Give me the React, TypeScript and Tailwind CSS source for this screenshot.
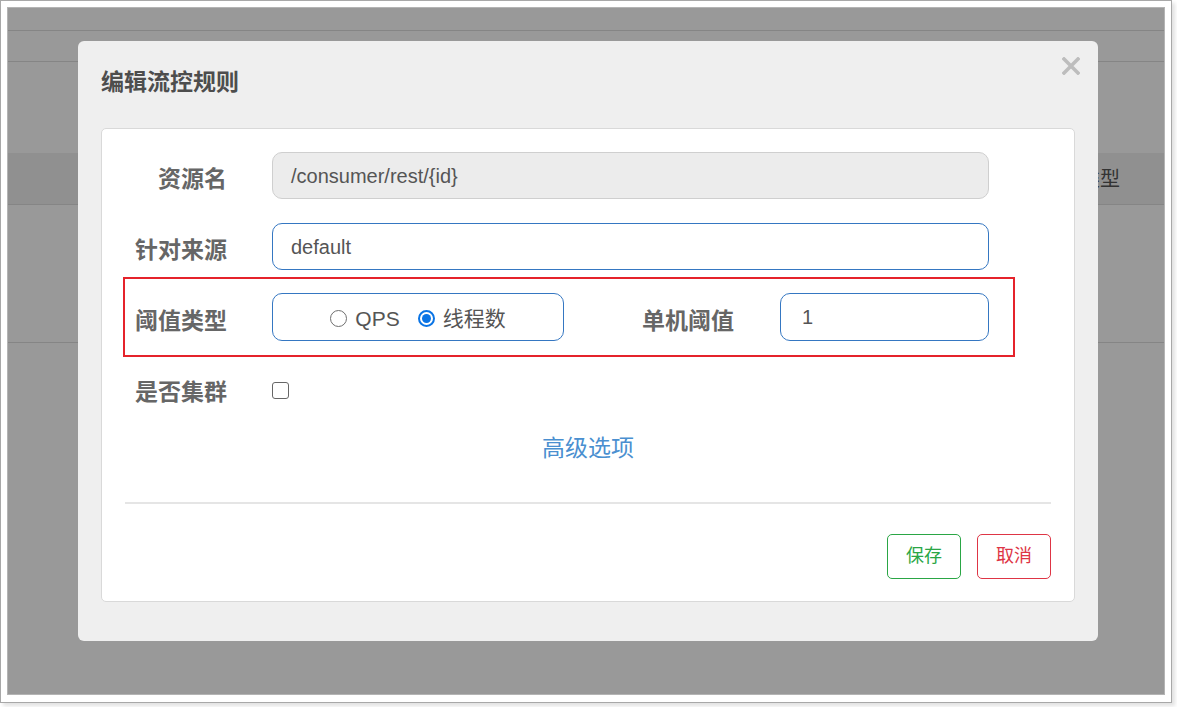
import React from "react";

const FONT = "font-['Liberation_Sans','Noto_Sans_CJK_SC',sans-serif]";

function Label({ children, className = "" }: { children: React.ReactNode; className?: string }) {
  return (
    <div className={`shrink-0 text-right text-[23px] leading-[28px] font-bold text-[#666] pt-[7px] ${className}`}>
      {children}
    </div>
  );
}

function Radio({ checked }: { checked?: boolean }) {
  if (checked) {
    return (
      <span className="w-[17px] h-[17px] rounded-full border-2 border-[#0a74e5] bg-white flex items-center justify-center">
        <span className="w-[9px] h-[9px] rounded-full bg-[#0a74e5]" />
      </span>
    );
  }
  return <span className="w-[17px] h-[17px] rounded-full border-[1.5px] border-[#6f6f6f] bg-white" />;
}

function CloseIcon() {
  return (
    <svg width="18" height="18" viewBox="0 0 18 18">
      <path d="M2 2 L16 16 M16 2 L2 16" stroke="#bdbdbd" strokeWidth="3.6" strokeLinecap="square" />
    </svg>
  );
}

function EditRuleModal() {
  return (
    <div className="w-[1020px] h-[600px] bg-[#efefef] rounded-[6px] flex flex-col">
      <div className="flex justify-between pl-[23px] pr-[18px]">
        <h4 className="mt-[27px] text-[23px] leading-[28px] font-bold text-[#4d4d4d]">编辑流控规则</h4>
        <button className="mt-[16px] w-[18px] h-[18px]">
          <CloseIcon />
        </button>
      </div>

      <div className="mx-[23px] mt-[32px] bg-white border border-[#d9d9d9] rounded-[5px] pt-[23px] pb-[22px] px-[23px]">
        {/* 资源名 */}
        <div className="flex items-center h-[47px]">
          <Label className="w-[102px]">资源名</Label>
          <div className="ml-[45px] w-[717px] h-[47px] rounded-[10px] border border-[#cfcfcf] bg-[#ececec] flex items-center pl-[18px] pt-[1px] text-[20px] text-[#555]">
            {"/consumer/rest/{id}"}
          </div>
        </div>

        {/* 针对来源 */}
        <div className="flex items-center h-[47px] mt-[24px]">
          <Label className="w-[102px]">针对来源</Label>
          <div className="ml-[45px] w-[717px] h-[47px] rounded-[10px] border border-[#3577c2] bg-white flex items-center pl-[18px] text-[20px] text-[#555]">
            default
          </div>
        </div>

        {/* 阈值类型 — highlighted */}
        <div className="-ml-[2px] mt-[7px] w-[892px] h-[80px] border-2 border-[#e5232b] pt-[14px]">
          <div className="flex items-center h-[48px]">
            <Label className="w-[102px]">阈值类型</Label>
            <div className="ml-[45px] w-[292px] h-[48px] rounded-[10px] border border-[#3577c2] flex items-center justify-center pt-[3px] text-[21px] text-[#555]">
              <Radio />
              <span className="ml-[8px]">QPS</span>
              <span className="ml-[18px] flex">
                <Radio checked />
              </span>
              <span className="ml-[8px]">线程数</span>
            </div>
            <Label className="w-[170px]">单机阈值</Label>
            <div className="ml-[46px] w-[209px] h-[48px] rounded-[10px] border border-[#3577c2] bg-white flex items-center pl-[21px] text-[20px] text-[#555]">
              1
            </div>
          </div>
        </div>

        {/* 是否集群 */}
        <div className="flex items-center h-[47px] mt-[8px]">
          <Label className="w-[102px]">是否集群</Label>
          <span className="ml-[45px] w-[17px] h-[17px] rounded-[3px] border-[1.5px] border-[#666] bg-white mt-[4px]" />
        </div>

        <div className="mt-[21px] text-center text-[23px] leading-[30px] text-[#4a8fd0]">高级选项</div>

        <div className="mt-[39px] h-[2px] bg-[#e5e5e5]" />

        <div className="mt-[30px] flex justify-end gap-[16px]">
          <button className="w-[74px] h-[45px] rounded-[5px] border border-[#2aa645] text-[#2aa645] text-[18px] bg-white">
            保存
          </button>
          <button className="w-[74px] h-[45px] rounded-[5px] border border-[#de3545] text-[#de3545] text-[18px] bg-white">
            取消
          </button>
        </div>
      </div>
    </div>
  );
}

export default function App() {
  return (
    <div className={`w-[1177px] h-[707px] bg-white ${FONT}`}>
      <div className="w-[1172px] h-[703px] border border-[#a8a8a8] bg-white p-[6px] shadow-[3px_3px_4px_rgba(0,0,0,0.12)]">
        <div className="relative w-[1158px] h-[688px] border border-[#b4b4b4] overflow-hidden bg-white">
          {/* underlying page */}
          <div className="h-[23px] border-b border-[#dedede]" />
          <div className="h-[31px] border-b border-[#dedede]" />
          <div className="h-[91px]" />
          <div className="h-[52px] bg-[#f0f0f0] border-b border-[#dedede] flex items-center justify-end pr-[44px] text-[20px] text-[#555]">
            类型
          </div>
          <div className="h-[138px] border-b border-[#dedede]" />

          {/* overlay */}
          <div className="absolute inset-0 bg-black/40" />

          <div className="absolute left-[70px] top-[33px]">
            <EditRuleModal />
          </div>
        </div>
      </div>
    </div>
  );
}
